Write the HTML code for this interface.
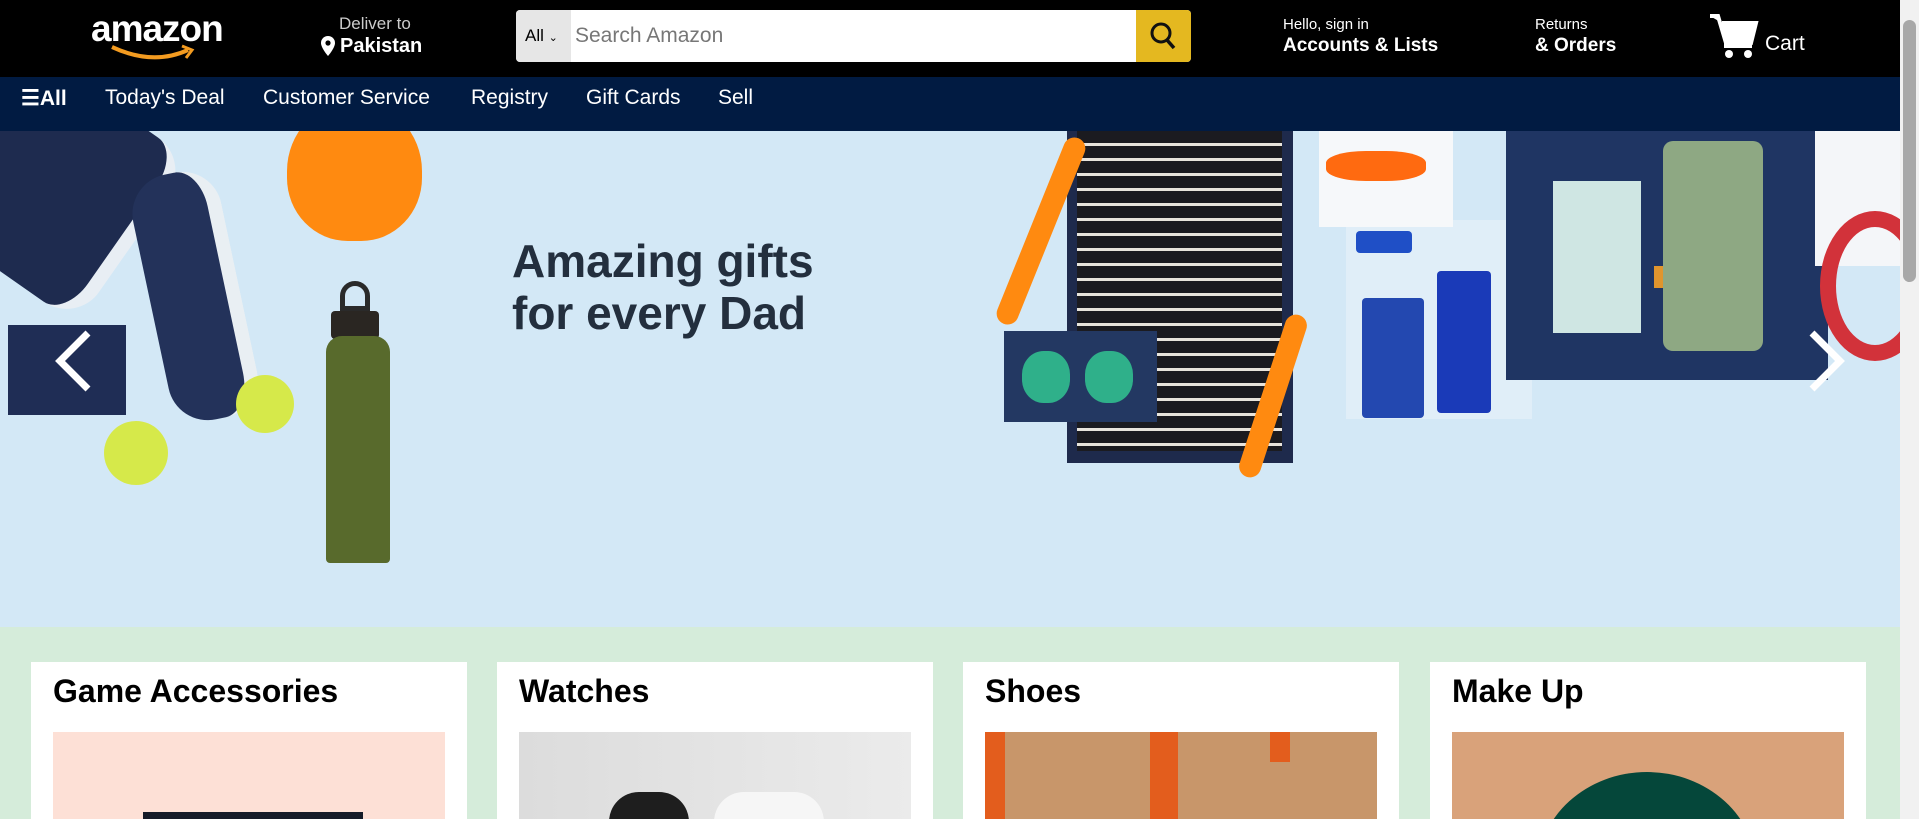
<!DOCTYPE html>
<html><head><meta charset="utf-8"><style>
*{margin:0;padding:0;box-sizing:border-box}
html,body{width:1919px;height:819px;overflow:hidden}
body{font-family:"Liberation Sans",Arial,sans-serif;background:#d5ecda;position:relative}
.a{position:absolute}
#top{left:0;top:0;width:1900px;height:77px;background:#000;color:#fff}
#nav{left:0;top:77px;width:1900px;height:54px;background:#011b42;color:#fff;font-size:21px}
#nav span{position:absolute;top:9px;white-space:nowrap}
#hero{left:0;top:131px;width:1900px;height:496px;background:#d3e8f6;overflow:hidden}
.card{top:662px;width:436px;height:157px;background:#fff;overflow:hidden}
.card h2{position:absolute;left:22px;top:11px;font-size:32px;font-weight:bold;color:#000}
.card .im{position:absolute;left:22px;top:70px;width:392px;height:100px;overflow:hidden}
</style></head><body>
<div id="top" class="a">
  <div class="a" style="left:91px;top:8px;font-size:37px;font-weight:bold;letter-spacing:-1px">amazon</div>
  <svg class="a" style="left:108px;top:44px" width="90" height="18"><path d="M4 3 Q45 22 80 6" stroke="#f39b20" stroke-width="4" fill="none"/><path d="M74 2 L84 6 L78 14" stroke="#f39b20" stroke-width="3" fill="none"/></svg>
  <div class="a" style="left:339px;top:14px;font-size:17px;color:#ccc">Deliver to</div>
  <svg class="a" style="left:320px;top:35px" width="16" height="22"><path d="M8 1a7 7 0 0 1 7 7c0 5-7 13-7 13S1 13 1 8a7 7 0 0 1 7-7z" fill="#fff"/><circle cx="8" cy="8" r="2.6" fill="#000"/></svg>
  <div class="a" style="left:340px;top:35px;font-size:20px;font-weight:bold">Pakistan</div>
  <div class="a" style="left:516px;top:10px;width:675px;height:52px;background:#fff;border-radius:4px;overflow:hidden">
    <div class="a" style="left:0;top:0;width:55px;height:52px;background:#e6e6e6;color:#000;font-size:17px;padding:16px 0 0 9px">All <span style="font-size:11px">&#8964;</span></div>
    <div class="a" style="left:59px;top:14px;font-size:21px;color:#777">Search Amazon</div>
    <div class="a" style="right:0;top:0;width:55px;height:52px;background:#e4b820">
      <svg width="55" height="52"><circle cx="25" cy="23" r="9" stroke="#111" stroke-width="3" fill="none"/><path d="M31 30l7 8" stroke="#111" stroke-width="3.5"/></svg></div>
  </div>
  <div class="a" style="left:1283px;top:16px;font-size:15px">Hello, sign in</div>
  <div class="a" style="left:1283px;top:35px;font-size:19px;font-weight:bold">Accounts &amp; Lists</div>
  <div class="a" style="left:1535px;top:16px;font-size:15px">Returns</div>
  <div class="a" style="left:1535px;top:35px;font-size:19px;font-weight:bold">&amp; Orders</div>
  <svg class="a" style="left:1708px;top:13px" width="52" height="46"><path d="M2 3h8l8 27h25l5-20H14" stroke="#fff" stroke-width="4" fill="#fff"/><rect x="16" y="30" width="28" height="5" fill="#fff"/><circle cx="21" cy="41" r="4" fill="#fff"/><circle cx="40" cy="41" r="4" fill="#fff"/></svg>
  <div class="a" style="left:1765px;top:32px;font-size:21px">Cart</div>
</div>
<div id="nav" class="a">
  <span style="left:21px;font-weight:bold">&#9776;All</span>
  <span style="left:105px">Today's Deal</span>
  <span style="left:263px">Customer Service</span>
  <span style="left:471px">Registry</span>
  <span style="left:586px">Gift Cards</span>
  <span style="left:718px">Sell</span>
</div>
<div id="hero" class="a">
  <div class="a" style="left:-30px;top:-40px;width:180px;height:200px;background:#1e2b4f;border-radius:40px;transform:rotate(35deg);border-right:14px solid #e8eef4"></div>
  <div class="a" style="left:150px;top:40px;width:90px;height:250px;background:#23325a;border-radius:40px;transform:rotate(-12deg);border-right:14px solid #e9eff3"></div>
  <div class="a" style="left:287px;top:-30px;width:135px;height:140px;background:#ff8a10;border-radius:50% 50% 45% 45%"></div>
  <div class="a" style="left:8px;top:194px;width:118px;height:90px;background:#1f2d55"></div>
  <div class="a" style="left:104px;top:290px;width:64px;height:64px;background:#d6e94a;border-radius:50%"></div>
  <div class="a" style="left:236px;top:244px;width:58px;height:58px;background:#d6e94a;border-radius:50%"></div>
  <div class="a" style="left:340px;top:150px;width:30px;height:30px;border:5px solid #2a2a2a;border-radius:50% 50% 0 0"></div>
  <div class="a" style="left:331px;top:180px;width:48px;height:28px;background:#2a2622;border-radius:4px"></div>
  <div class="a" style="left:326px;top:205px;width:64px;height:227px;background:#586a2c;border-radius:16px 16px 4px 4px"></div>
  <div class="a" style="left:512px;top:104px;font-size:46px;font-weight:bold;color:#232f3e;line-height:52px">Amazing gifts<br>for every Dad</div>
  <div class="a" style="left:1067px;top:-5px;width:226px;height:337px;background:#1e2a4c"></div>
  <div class="a" style="left:1077px;top:0;width:205px;height:320px;background:repeating-linear-gradient(#1b1b20 0 12px,#e8e4dc 12px 15px)"></div>
  <div class="a" style="left:1004px;top:200px;width:153px;height:91px;background:#233862"></div>
  <div class="a" style="left:1022px;top:220px;width:48px;height:52px;background:#2fb08a;border-radius:45%"></div>
  <div class="a" style="left:1085px;top:220px;width:48px;height:52px;background:#2fb08a;border-radius:45%"></div>
  <div class="a" style="left:1346px;top:89px;width:186px;height:199px;background:#e0eef8"></div>
  <div class="a" style="left:1319px;top:0;width:134px;height:96px;background:#f6f8fa"></div>
  <div class="a" style="left:1326px;top:20px;width:100px;height:30px;background:#ff6a10;border-radius:40%"></div>
  <div class="a" style="left:1356px;top:100px;width:56px;height:22px;background:#1f4fc6;border-radius:4px"></div>
  <div class="a" style="left:1362px;top:167px;width:62px;height:120px;background:#2348b0;border-radius:4px"></div>
  <div class="a" style="left:1437px;top:140px;width:54px;height:142px;background:#1a3ab8;border-radius:4px"></div>
  <div class="a" style="left:1506px;top:-5px;width:322px;height:254px;background:#1f3563"></div>
  <div class="a" style="left:1553px;top:50px;width:88px;height:152px;background:#cfe6e3"></div>
  <div class="a" style="left:1654px;top:135px;width:62px;height:22px;background:#e0952e"></div>
  <div class="a" style="left:1663px;top:10px;width:100px;height:210px;background:#8ea883;border-radius:10px"></div>
  <div class="a" style="left:1815px;top:0;width:90px;height:135px;background:#f4f6f9"></div>
  <div class="a" style="left:1820px;top:80px;width:110px;height:150px;border:16px solid #d2323a;border-radius:50%"></div>
  <div class="a" style="left:1030px;top:0;width:22px;height:200px;background:#ff8a10;border-radius:12px;transform:rotate(22deg)"></div>
  <div class="a" style="left:1262px;top:180px;width:22px;height:170px;background:#ff8a10;border-radius:12px;transform:rotate(18deg)"></div>
  <svg class="a" style="left:50px;top:198px" width="45" height="64"><path d="M38 4L10 32l28 28" stroke="#fff" stroke-width="7" fill="none"/></svg>
  <svg class="a" style="left:1805px;top:198px" width="45" height="64"><path d="M7 4l28 28L7 60" stroke="#fff" stroke-width="7" fill="none"/></svg>
</div>
<div class="a card" style="left:31px"><h2>Game Accessories</h2><div class="im" style="background:#fde0d6"><div class="a" style="left:90px;top:80px;width:220px;height:60px;background:#151b28"></div></div></div>
<div class="a card" style="left:497px"><h2>Watches</h2><div class="im" style="background:linear-gradient(90deg,#dcdcdc,#ebebeb)"><div class="a" style="left:90px;top:60px;width:80px;height:80px;background:#1e1e1e;border-radius:30px"></div><div class="a" style="left:195px;top:60px;width:110px;height:80px;background:#f6f6f6;border-radius:30px"></div></div></div>
<div class="a card" style="left:963px"><h2>Shoes</h2><div class="im" style="background:#c8966a"><div class="a" style="left:0;top:0;width:20px;height:130px;background:#e35d1d"></div><div class="a" style="left:165px;top:0;width:28px;height:120px;background:#e35d1d"></div><div class="a" style="left:285px;top:0;width:20px;height:30px;background:#e35d1d"></div><div class="a" style="left:320px;top:110px;width:80px;height:30px;background:#e35d1d"></div></div></div>
<div class="a card" style="left:1430px"><h2>Make Up</h2><div class="im" style="background:#d9a27a"><div class="a" style="left:85px;top:40px;width:220px;height:200px;background:#05473a;border-radius:50% 50% 0 0"></div><div class="a" style="left:135px;top:90px;width:120px;height:50px;background:#fff"></div><div class="a" style="left:145px;top:98px;width:100px;height:40px;background:#cf5c8c"></div></div></div>
<div class="a" style="left:1900px;top:0;width:19px;height:819px;background:#f1f1f1"></div>
<div class="a" style="left:1903px;top:20px;width:13px;height:262px;background:#a8a8a8;border-radius:7px"></div>
</body></html>
